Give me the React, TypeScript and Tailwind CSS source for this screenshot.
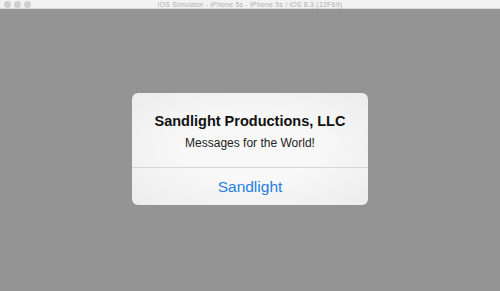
import React from "react";

const Light = () => <span className="block w-[7px] h-[7px] rounded-full bg-[#cfcfcf]" />;

export default function App() {
  return (
    <div className="w-[500px] h-[291px] flex flex-col bg-[#949494] font-['Liberation_Sans',Arial,sans-serif]">
      {/* window title bar */}
      <div className="relative h-[9px] flex items-center justify-center bg-[#f2f2f2] border-b border-[#d8d8d8]">
        <div className="absolute left-[4px] top-[1px] flex gap-[3px]">
          <Light />
          <Light />
          <Light />
        </div>
        <span className="text-[7px] leading-none text-[#b0b0b0] tracking-[0.2px]">
          iOS Simulator - iPhone 5s - iPhone 5s / iOS 8.3 (12F69)
        </span>
      </div>

      {/* screen */}
      <div className="flex-1 flex items-start justify-center pt-[84px]">
        <div className="w-[236px] h-[112px] rounded-[6px] bg-[radial-gradient(ellipse_at_center,#f8f8f8_40%,#ececec_100%)] flex flex-col overflow-hidden">
          <div className="h-[74px] flex flex-col items-center pt-[19px]">
            <div className="text-[14.5px] leading-[18px] font-bold text-[#111]">Sandlight Productions, LLC</div>
            <div className="mt-[6px] text-[12px] leading-[15px] text-[#222]">Messages for the World!</div>
          </div>
          <div className="h-px bg-[#d6d6d6]" />
          <div className="flex-1 flex items-center justify-center pt-[1px] text-[15.5px] text-[#1f7fe0]">Sandlight</div>
        </div>
      </div>
    </div>
  );
}
